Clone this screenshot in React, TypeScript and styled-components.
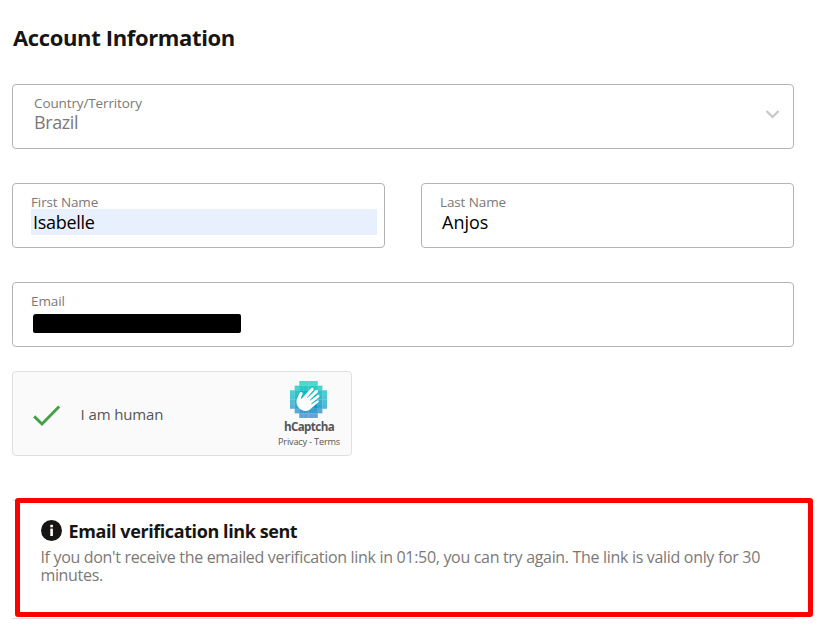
import React from 'react';
import styled, { createGlobalStyle } from 'styled-components';

const GlobalStyle = createGlobalStyle`
  * { box-sizing: border-box; }
  body {
    margin: 0;
    background: #fff;
    color: #161513;
    font-family: "Open Sans", "Noto Sans", sans-serif;
  }
`;

const Page = styled.main`
  width: 817px;
  height: 637px;
  padding: 22px 0 0 12px;
  overflow: hidden;
`;

const Form = styled.div`
  display: flex;
  flex-direction: column;
  width: 782px;
`;

const Title = styled.h1`
  margin: 0 0 32px 1px;
  font-size: 22px;
  line-height: 30px;
  font-weight: 700;
  letter-spacing: -0.36px;
  white-space: nowrap;
`;

const Fields = styled.div`
  display: grid;
  grid-template-columns: 373px 373px;
  gap: 34px 36px;
`;

const Field = styled.div<{ $wide?: boolean; $indent?: number }>`
  display: flex;
  flex-direction: column;
  position: relative;
  grid-column: ${(p) => (p.$wide ? '1 / -1' : 'auto')};
  height: 65px;
  padding: 9px 7px 0 ${(p) => p.$indent ?? 18}px;
  border: 1px solid #b5b4b3;
  border-radius: 4px;
`;

const Label = styled.label`
  height: 16px;
  font-size: 13.5px;
  line-height: 18px;
  letter-spacing: -0.12px;
  color: #7b7977;
  white-space: nowrap;
`;

const Value = styled.div<{ $filled?: boolean; $muted?: boolean; $spacing?: number }>`
  height: 26px;
  padding-left: ${(p) => (p.$muted ? 0 : 2)}px;
  margin-top: ${(p) => (p.$muted ? -1 : 0)}px;
  font-size: 18px;
  line-height: 26px;
  letter-spacing: ${(p) => p.$spacing ?? 0}px;
  color: ${(p) => (p.$muted ? '#7b7977' : '#000')};
  background: ${(p) => (p.$filled ? '#e8f0fe' : 'transparent')};
`;

const Redaction = styled.div`
  width: 208px;
  height: 19px;
  margin: 6px 0 0 2px;
  border-radius: 3px 2px 2px 2px;
  background: #000;
`;

const Chevron = styled.svg`
  position: absolute;
  right: 13px;
  top: 24px;
`;

const Captcha = styled.div`
  display: flex;
  width: 340px;
  height: 85px;
  margin-top: 24px;
  border: 1px solid #e0e0e0;
  border-radius: 4px;
  background: #fafafa;
`;

const CaptchaCheck = styled.svg`
  margin: 31px 0 0 19px;
  flex: none;
`;

const CaptchaText = styled.span`
  margin: 31px 0 0 18.6px;
  width: 188.4px;
  font-size: 15px;
  line-height: 22px;
  letter-spacing: -0.12px;
  color: #555;
`;

const CaptchaBrand = styled.div`
  display: flex;
  flex-direction: column;
  align-items: center;
  width: 80px;
  padding-top: 9px;
  color: #555;
  white-space: nowrap;
`;

const BrandName = styled.strong`
  font-size: 11.6px;
  line-height: 14px;
  letter-spacing: -0.6px;
  margin-top: 2px;
`;

const BrandLinks = styled.span`
  margin-top: 2px;
  font-size: 9.2px;
  line-height: 12px;
  letter-spacing: -0.2px;
`;

const Notice = styled.section`
  position: relative;
  height: 119px;
  margin-top: 44px;
  padding: 19px 0 0 28px;
  border-top: 1px solid #e4e2e0;
  border-bottom: 1px solid #e4e2e0;
`;

const NoticeFrame = styled.div`
  position: absolute;
  left: 3px;
  top: -3px;
  width: 798px;
  height: 119px;
  border: 5px solid #f00;
  border-radius: 3px;
`;

const NoticeHeading = styled.div`
  display: flex;
  gap: 6.5px;
`;

const NoticeTitle = styled.h2`
  margin: -1px 0 0;
  font-size: 18px;
  line-height: 24px;
  font-weight: 700;
  letter-spacing: -0.41px;
  white-space: nowrap;
`;

const InfoIcon = styled.svg`
  margin: 0 0 0 1px;
  flex: none;
`;

const NoticeBody = styled.p`
  margin: 5px 0 0 0.4px;
  font-size: 16px;
  line-height: 18px;
  color: #7b7977;
  white-space: nowrap;
  letter-spacing: -0.317px;
`;

const rowColors = ['#00c8b6', '#00c0b8', '#02b9be', '#06afc2', '#0aa3c6', '#0c96c8', '#1489c8', '#1e80c6'];
const rowInsets = [2, 1, 0, 0, 0, 0, 1, 2];

function CaptchaLogo() {
  return (
    <svg width="37" height="37" viewBox="0 0 32 32">
      {rowColors.flatMap((color, row) => {
        const inset = rowInsets[row];
        return Array.from({ length: 8 - inset * 2 }, (_, i) => {
          const col = i + inset;
          const edge = i === 0 || col === 7 - inset || row === 0 || row === 7;
          const second = row === 1 || row === 6 || col === 1 || col === 6;
          return (
            <rect
              key={`${row}-${col}`}
              x={col * 4}
              y={row * 4}
              width="4.02"
              height="4.02"
              fill={color}
              opacity={edge ? 0.7 : second ? 0.85 : 1}
            />
          );
        });
      })}
      <path
        fill="#fff"
        transform="translate(1.6 1.5) scale(0.88)"
        d="m8.83437 14.9991 1.41783-3.17c.5124-.8049.4473-1.79358-.1303-2.37122-.0732-.0732-.15454-.13832-.23587-.19525-.36602-.22775-.79706-.27656-1.19556-.13829-.44733.16269-.82962.47991-1.06549.89477 0 0-1.94384 4.5306-2.66775 6.5641s-.4311 5.7588 2.31796 8.516c2.91999 2.92 7.15719 3.5869 9.85739 1.5616.1139-.0569.2277-.122.3253-.2034l8.3374-6.962c.4067-.3335 1.0086-1.0248.4717-1.8137-.5205-.7646-1.5128-.244-1.9195.0163l-4.7989 3.4894c-.0894.0813-.2277.065-.3091-.0244 0 0 0-.0081-.0081-.0081-.122-.1464-.1464-.5368.0488-.6994l7.353-6.2381c.6344-.5694.7239-1.4071.2034-1.9846-.5125-.5693-1.3177-.553-1.9602.0244l-6.6204 5.1731c-.122.1057-.3091.0895-.4067-.0406 0-.0082-.0081-.0082-.0081-.0163-.1301-.1464-.1789-.3904-.0325-.5368l7.4994-7.27979c.5938-.55307.6263-1.48031.0732-2.08222-.2684-.29281-.6507-.45549-1.0492-.45549-.4067 0-.7971.15455-1.0899.43922l-7.6621 7.19868c-.1871.1871-.5449 0-.5938-.2196-.0162-.0814.0082-.1628.0651-.2197l5.8721-6.67734c.5856-.53681.6181-1.44778.0813-2.03341-.5368-.58563-1.4478-.61816-2.0334-.08134-.0325.02441-.0569.05694-.0895.08947l-8.8978 9.84838c-.3172.3172-.7809.3335-1.0005.1464-.1383-.122-.1627-.3254-.0407-.4718z"
      />
    </svg>
  );
}

export default function App() {
  return (
    <Page>
      <GlobalStyle />
      <Form>
        <Title>Account Information</Title>
        <Fields>
          <Field $wide $indent={21}>
            <Label>Country/Territory</Label>
            <Value $muted $spacing={-0.4}>Brazil</Value>
            <Chevron width="15" height="11" viewBox="0 0 15 11">
              <path d="M1.5 2 L7.5 8 L13.5 2" fill="none" stroke="#c7c7c7" strokeWidth="2.2" />
            </Chevron>
          </Field>
          <Field>
            <Label>First Name</Label>
            <Value $filled $spacing={-0.3}>Isabelle</Value>
          </Field>
          <Field>
            <Label>Last Name</Label>
            <Value>Anjos</Value>
          </Field>
          <Field $wide>
            <Label>Email</Label>
            <Redaction />
          </Field>
        </Fields>
        <Captcha>
          <CaptchaCheck width="30" height="24" viewBox="0 0 30 24">
            <path d="M2.2 13.4 L10 21 L27.2 3.6" fill="none" stroke="#43a047" strokeWidth="2.9" />
          </CaptchaCheck>
          <CaptchaText>I am human</CaptchaText>
          <CaptchaBrand>
            <CaptchaLogo />
            <BrandName>hCaptcha</BrandName>
            <BrandLinks>Privacy - Terms</BrandLinks>
          </CaptchaBrand>
        </Captcha>
        <Notice>
          <NoticeFrame />
          <NoticeHeading>
            <InfoIcon width="21" height="21" viewBox="0 0 21 21">
              <circle cx="10.5" cy="10.5" r="10.5" fill="#161513" />
              <rect x="9.3" y="4.8" width="2.6" height="2.5" fill="#fff" />
              <rect x="9.3" y="8.6" width="2.6" height="7.4" fill="#fff" />
            </InfoIcon>
            <NoticeTitle>Email verification link sent</NoticeTitle>
          </NoticeHeading>
          <NoticeBody>
            If you don't receive the emailed verification link in 01:50, you can try again. The link is valid only for 30
            <br />
            minutes.
          </NoticeBody>
        </Notice>
      </Form>
    </Page>
  );
}
